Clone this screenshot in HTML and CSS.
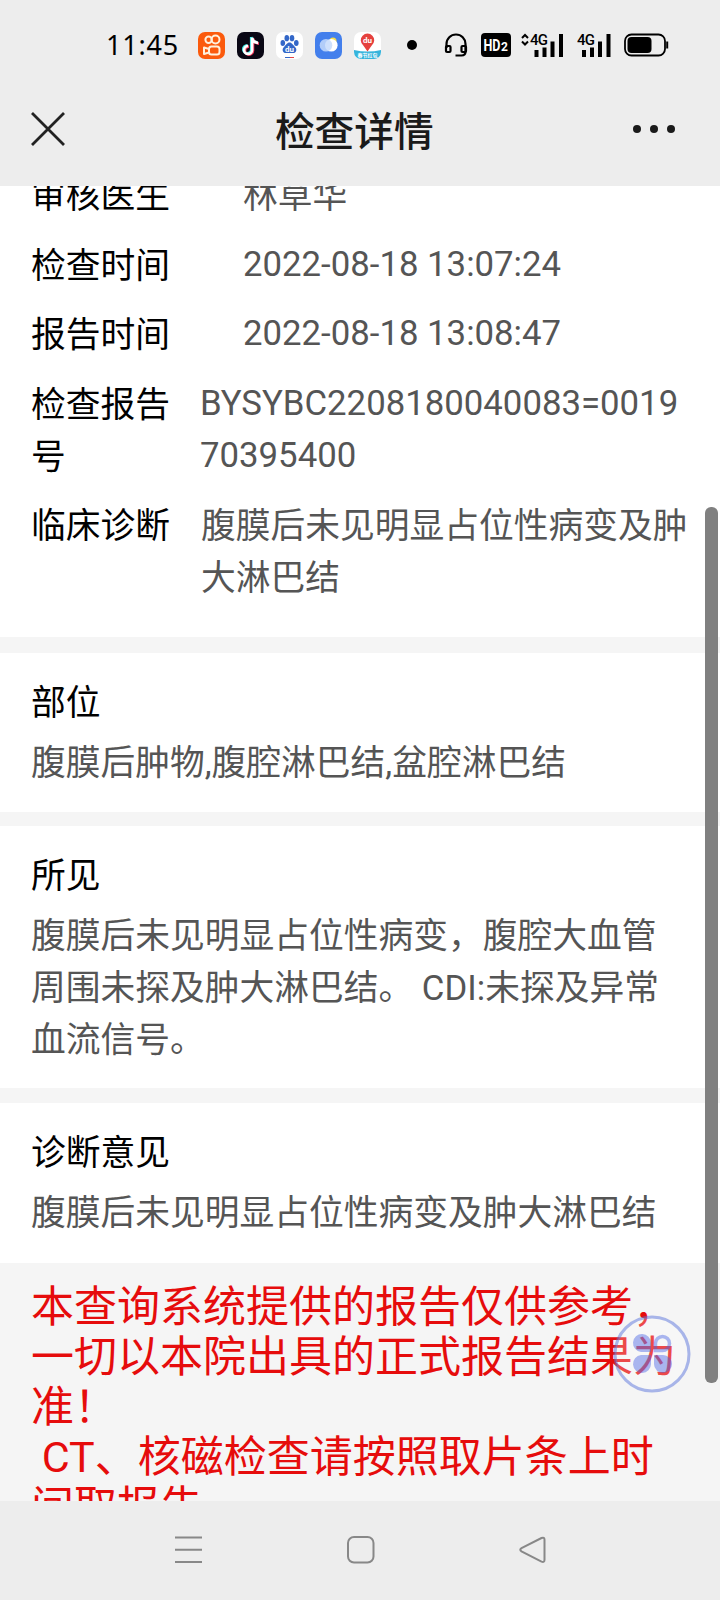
FILE: index.html
```html
<!DOCTYPE html>
<html lang="zh-CN">

<head>
    <meta charset="UTF-8">
    <meta name="viewport" content="width=device-width, initial-scale=1.0">
    <title>检查详情</title>
    <link rel="stylesheet" href="styles.css">
</head>

<body>
    <div class="status-bar">
        <span class="clock">11:45</span>
        <div class="apps">
            <svg width="27" height="27" viewBox="0 0 27 27">
                <rect width="27" height="27" rx="7" fill="#fb5a0c" />
                <g fill="none" stroke="#fff0dc" stroke-width="2">
                    <circle cx="10.6" cy="7.7" r="3.2" />
                    <circle cx="17.5" cy="7.5" r="4" />
                    <rect x="11" y="14.500" width="10.500" height="8" rx="2.500" />
                    <path d="M11 17l-5-1.500v6.500l5-1.500z" stroke-linejoin="round" />
                </g>
            </svg>
            <svg width="27" height="27" viewBox="0 0 27 27">
                <rect width="27" height="27" rx="7" fill="#090714" />
                <g fill="none" stroke-width="2.6">
                    <path d="M14.200 5v12.200a4 4 0 1 1-4-4M14.200 5c.5 3 2.800 5 6 5.200" stroke="#3ee8e4" />
                    <path d="M16 6.400v12.200a4 4 0 1 1-4-4M16 6.400c.5 3 2.800 5 6 5.200" stroke="#f5385c" />
                    <path d="M15.100 5.700v12.200a4 4 0 1 1-4-4M15.100 5.700c.5 3 2.800 5 6 5.200" stroke="#fff" />
                </g>
            </svg>
            <svg width="27" height="27" viewBox="0 0 27 27">
                <rect width="27" height="27" rx="7" fill="#fff" />
                <g fill="#3367c8">
                    <ellipse cx="6.800" cy="11" rx="2.300" ry="3" />
                    <ellipse cx="10.800" cy="6.200" rx="2.300" ry="3.100" />
                    <ellipse cx="16" cy="6.200" rx="2.300" ry="3.100" />
                    <ellipse cx="20.300" cy="11" rx="2.300" ry="3" />
                    <path d="M13.500 10.500c2.500 0 3.500 2.600 5.300 4.200 2.800 2.500 1.600 6.300-1.800 6.300h-7c-3.400 0-4.600-3.800-1.800-6.300 1.800-1.600 2.800-4.200 5.300-4.200z" />
                </g>
                <text x="13.500" y="20" class="paw-text">du</text>
                <path d="M9 25.500h5" stroke="#3367c8" />
                <path d="M14 25.500h4" stroke="#e44646" />
            </svg>
            <svg width="27" height="27" viewBox="0 0 27 27">
                <rect width="27" height="27" rx="7" fill="#437fec" />
                <circle cx="18" cy="9" r="3.500" fill="#f5dc4c" />
                <circle cx="16.300" cy="13.300" r="6.300" fill="#fff" />
                <circle cx="11" cy="13.300" r="6.300" fill="#c6dbfb" fill-opacity=".85" />
            </svg>
            <svg width="27" height="27" viewBox="0 0 27 27">
                <rect width="27" height="27" rx="7" fill="#fff" />
                <path d="M0 18q13.500 3 27 0v2a7 7 0 0 1-7 7H7a7 7 0 0 1-7-7z" fill="#36b4dc" />
                <path d="M13.500 19.500l-4.200-6a6.700 6.700 0 1 1 8.400 0z" fill="#e5413e" />
                <text x="13.500" y="10.500" class="pin-text">du</text>
                <text x="13.500" y="25.300" class="pin-label">春节红包</text>
            </svg>
        </div>
        <span class="dot"></span>
        <svg class="headset" width="24" height="24" viewBox="0 0 24 24" fill="none" stroke="#000" stroke-width="2.200">
            <path d="M2.500 15v-4a9.500 9.500 0 0 1 19 0v7.500q0 4-4 4h-6" />
            <rect x="2" y="13" width="4.500" height="6" rx="1" />
            <rect x="17.500" y="13" width="4.500" height="6" rx="1" />
        </svg>
        <svg class="hd" width="30" height="24" viewBox="0 0 30 24">
            <rect width="30" height="24" rx="4" fill="#000" />
            <text x="2.500" y="18" class="hd-text" textLength="17" lengthAdjust="spacingAndGlyphs">HD</text>
            <text x="20" y="18" class="hd-num">2</text>
        </svg>
        <svg class="signal" width="43" height="24" viewBox="0 0 43 24">
            <path d="M1 5l3-3 3 3M1 8.500l3 3 3-3" fill="none" stroke="#000" stroke-width="2" />
            <text x="9" y="11.500" class="net-text">4G</text>
            <path d="M15.500 17v7M23.500 14.500v9.500M31.500 8.500v15.500M40 1v23" stroke="#000" stroke-width="4" />
        </svg>
        <svg class="signal-two" width="34" height="24" viewBox="0 0 34 24">
            <text x="0" y="11.500" class="net-text">4G</text>
            <path d="M7 17v7M15 14.500v9.500M23 8.500v15.500M31.500 1v23" stroke="#000" stroke-width="4" />
        </svg>
        <svg class="battery" width="45" height="24" viewBox="0 0 45 24">
            <rect x="1" y="1.500" width="40" height="21" rx="6.500" fill="none" stroke="#000" stroke-width="1.800" />
            <rect x="3.500" y="4" width="24" height="16" rx="4" fill="#000" />
            <path d="M43.200 8.500v7" stroke="#000" stroke-width="2" />
        </svg>
    </div>

    <div class="title-bar">
        <svg class="close" width="34" height="34" viewBox="0 0 34 34">
            <path d="M1 1l32 32M33 1L1 33" stroke="#222" stroke-width="2.800" />
        </svg>
        <h1>检查详情</h1>
        <div class="more"><span></span><span></span><span></span></div>
    </div>

    <div class="page">
        <div class="card info">
            <div class="row short"><div class="label">审核医生</div><div class="value">林草华</div></div>
            <div class="row short"><div class="label">检查时间</div><div class="value number">2022-08-18 13:07:24</div></div>
            <div class="row short"><div class="label">报告时间</div><div class="value number">2022-08-18 13:08:47</div></div>
            <div class="row"><div class="label">检查报告号</div><div class="value number">BYSYBC2208180040083=001970395400</div></div>
            <div class="row diagnosis"><div class="label">临床诊断</div><div class="value">腹膜后未见明显占位性病变及肿大淋巴结</div></div>
        </div>
        <div class="card section">
            <h2>部位</h2>
            <p>腹膜后肿物,腹腔淋巴结,盆腔淋巴结</p>
        </div>
        <div class="card section">
            <h2>所见</h2>
            <p>腹膜后未见明显占位性病变，腹腔大血管周围未探及肿大淋巴结。 CDI:未探及异常血流信号。</p>
        </div>
        <div class="card section">
            <h2>诊断意见</h2>
            <p>腹膜后未见明显占位性病变及肿大淋巴结</p>
        </div>
        <div class="notice">本查询系统提供的报告仅供参考，<br>一切以本院出具的正式报告结果为<br>准！<br>&nbsp;CT、核磁检查请按照取片条上时<br>间取报告</div>
        <div class="scrollbar"></div>
        <svg class="float-btn" width="78" height="78" viewBox="0 0 78 78">
            <circle cx="39" cy="39" r="37" fill="#fff" fill-opacity=".25" stroke="#5a74dc" stroke-opacity=".5" stroke-width="3" />
            <g fill="#4a64e4" fill-opacity=".45">
                <path d="M38 37h-10a9 9 0 1 1 10-9z" />
                <path d="M38 40h-10a9 9 0 1 0 10 9z" />
                <path d="M41 40h9a9 9 0 1 1-9 9z" />
            </g>
            <path d="M42.500 35.500v-7a7 7 0 1 1 7 7z" fill="none" stroke="#4a64e4" stroke-opacity=".45" stroke-width="3.500" />
        </svg>
    </div>

    <div class="nav-bar">
        <svg width="28" height="28" viewBox="0 0 28 28">
            <path d="M0 1.500h27M0 13.800h27M0 26h27" stroke="#888" stroke-width="2" />
        </svg>
        <svg width="28" height="28" viewBox="0 0 28 28">
            <rect x="1" y="1" width="25.500" height="25.500" rx="6" fill="none" stroke="#888" stroke-width="2" />
        </svg>
        <svg width="28" height="28" viewBox="0 0 28 28">
            <path d="M2.500 12.200L22.500 2q3-1.200 3 1.800v20q0 3-3 1.800L2.500 15.400q-2.500-1.600 0-3.200z" fill="none" stroke="#888" stroke-width="2" />
        </svg>
    </div>
</body>

</html>
```
FILE: styles.css
```css
* {
    box-sizing: border-box;
}

body {
    margin: 0;
    height: 1600px;
    display: flex;
    flex-direction: column;
    overflow: hidden;
    background-color: #ededed;
    font-family: Roboto, "Noto Sans CJK SC", sans-serif;
}

svg {
    display: block;
    flex: none;
}

.status-bar {
    height: 90px;
    flex: none;
    display: flex;
    align-items: center;
    padding-left: 106px;
}

.clock {
    width: 92px;
    padding-bottom: 2px;
    font-family: "Noto Sans", sans-serif;
    font-size: 27px;
    letter-spacing: 0.8px;
    color: #000;
}

.apps {
    display: flex;
    gap: 12px;
}

.dot {
    width: 10px;
    height: 10px;
    margin-left: 26px;
    border-radius: 50%;
    background-color: #000;
}

.headset {
    margin-left: 27px;
}

.hd {
    margin-left: 13px;
}

.signal {
    margin-left: 10px;
}

.signal-two {
    margin-left: 13px;
}

.battery {
    margin-left: 13px;
}

.paw-text,
.pin-text,
.pin-label {
    fill: #fff;
    font-size: 8px;
    font-weight: 700;
    text-anchor: middle;
}

.pin-label {
    font-size: 5px;
}

.hd-text {
    fill: #fff;
    font-size: 17px;
    font-weight: 700;
}

.hd-num {
    fill: #fff;
    font-size: 12px;
    font-weight: 700;
}

.net-text {
    font-size: 15px;
    font-weight: 500;
    letter-spacing: -0.8px;
}

.title-bar {
    height: 96px;
    flex: none;
    display: flex;
    justify-content: space-between;
    align-items: center;
    padding: 0 45px 18px 31px;
}

.title-bar h1 {
    margin: 7px 0 0 11px;
    font-size: 39.7px;
    font-weight: 500;
    line-height: 60px;
    color: #1a1a1a;
}

.more {
    display: flex;
    gap: 8.5px;
}

.more span {
    width: 8.5px;
    height: 8.5px;
    border-radius: 50%;
    background-color: #1a1a1a;
}

.page {
    position: relative;
    height: 1315px;
    flex: none;
    overflow: hidden;
    background-color: #f5f5f5;
    font-size: 34.75px;
    line-height: 52px;
}

.card {
    background-color: #fff;
    padding: 0 31px;
}

.info {
    display: flex;
    flex-direction: column;
    gap: 17.5px;
    height: 451px;
}

.info .row:first-child {
    margin-top: -16px;
}

.row {
    display: flex;
    flex: none;
}

.label {
    width: 140px;
    flex: none;
    color: #000;
}

.value {
    width: 488px;
    margin-left: 29px;
    color: #555;
    word-break: break-all;
}

/* Latin digits sit a little lower than the labels */
.number {
    margin-top: -2px;
}

.short .value {
    margin-left: 72px;
    width: auto;
}

.diagnosis .value {
    margin-left: 30px;
}

.section {
    margin-top: 16px;
    padding: 24px 31px;
    height: 159px;
}

.section + .section {
    margin-top: 14px;
    height: 262px;
}

.section + .section + .section {
    margin-top: 15px;
    height: 160px;
}

.section h2 {
    margin: 0 0 8px;
    font-size: inherit;
    font-weight: 400;
    color: #000;
}

.section p {
    margin: 0;
    width: 640px;
    color: #555;
}

.notice {
    padding: 19px 31px 0;
    font-size: 43px;
    line-height: 50px;
    color: #e60c0c;
    white-space: nowrap;
}

.scrollbar {
    position: absolute;
    top: 321px;
    left: 705px;
    width: 13px;
    height: 876px;
    border-radius: 6px;
    background-color: #808080;
}

.float-btn {
    position: absolute;
    top: 1129px;
    left: 613px;
}

.nav-bar {
    height: 99px;
    flex: none;
    display: flex;
    gap: 144px;
    padding: 35px 0 0 175px;
}
```
